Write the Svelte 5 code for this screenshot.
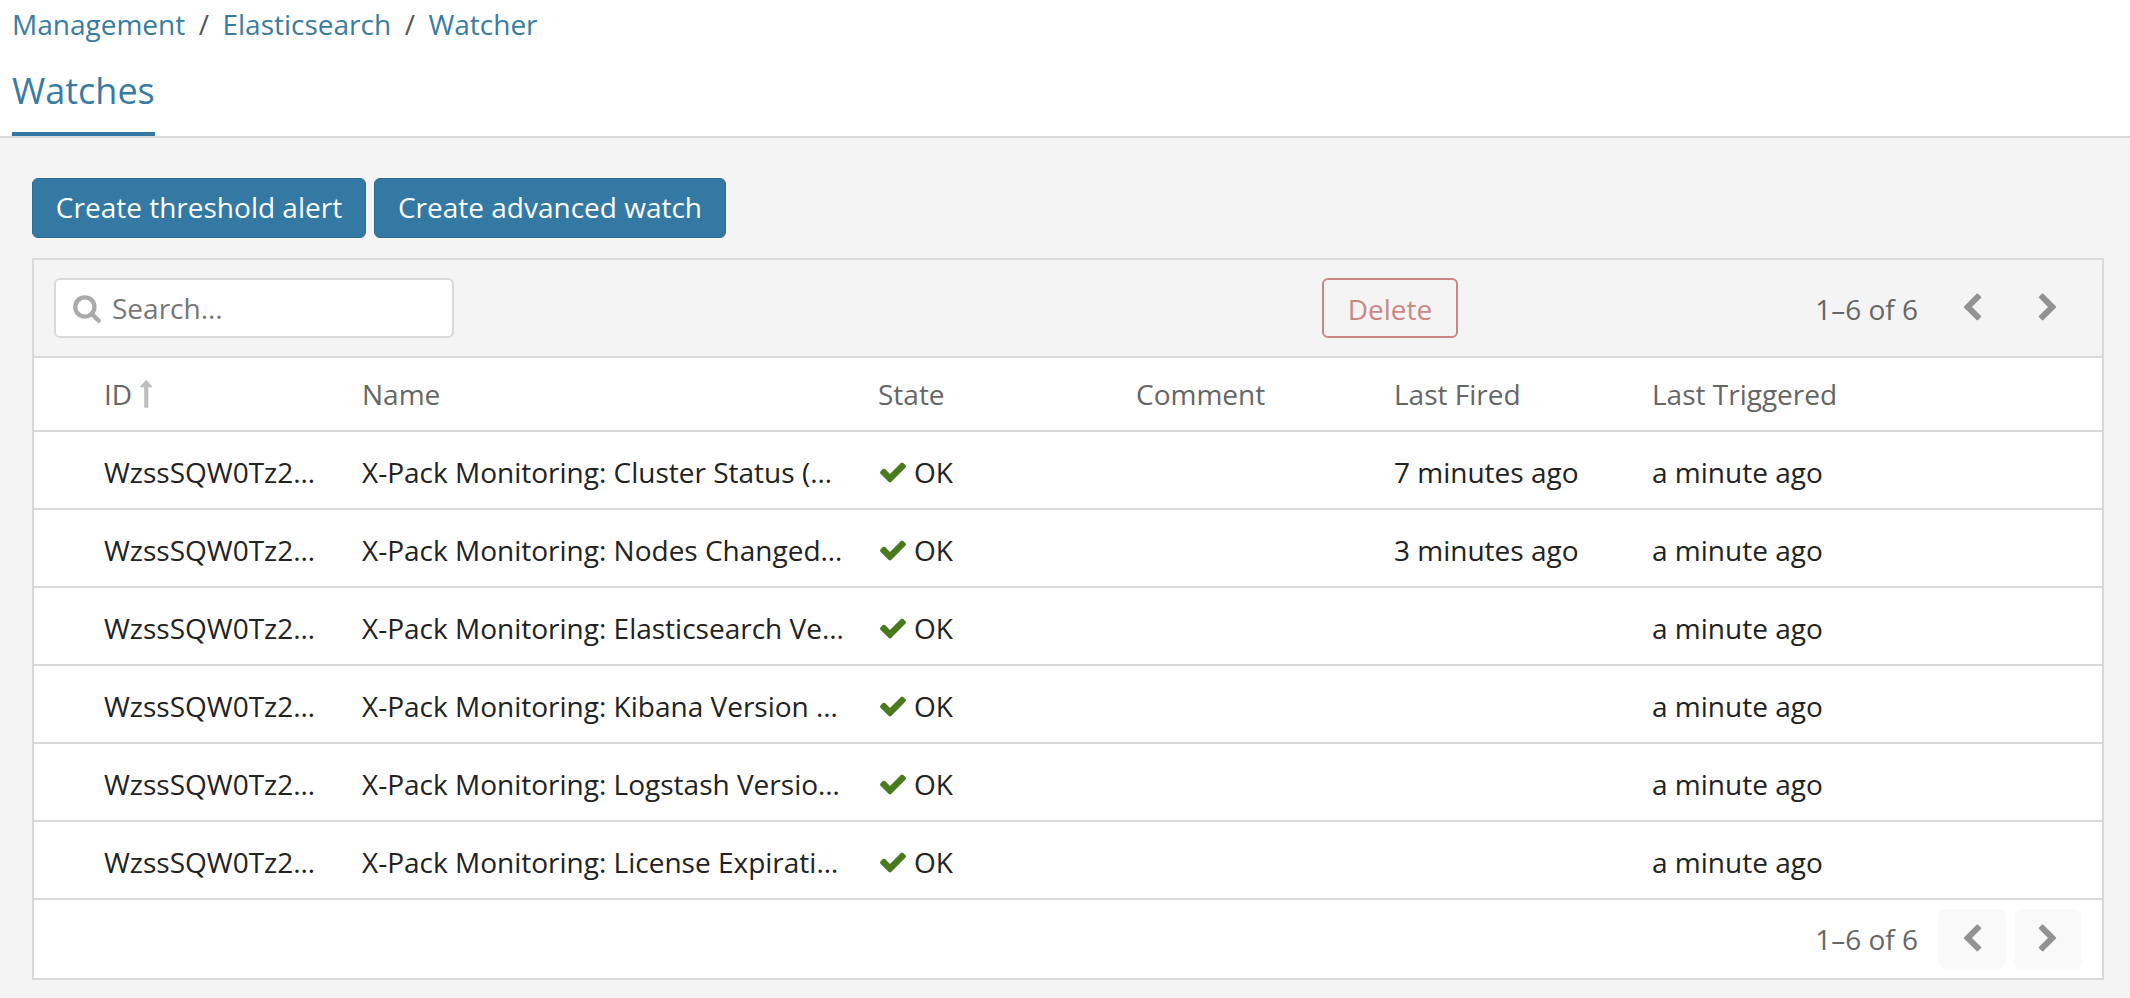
<script>
	const uid = 'WzssSQW0Tz2uc_xRAhk5Vg';
	const watches = [
		{ key: 'elasticsearch_cluster_status', name: 'Cluster Status', fired: '7 minutes ago' },
		{ key: 'elasticsearch_nodes', name: 'Nodes Changed', fired: '3 minutes ago' },
		{ key: 'elasticsearch_version_mismatch', name: 'Elasticsearch Version Mismatch', fired: '' },
		{ key: 'kibana_version_mismatch', name: 'Kibana Version Mismatch', fired: '' },
		{ key: 'logstash_version_mismatch', name: 'Logstash Version Mismatch', fired: '' },
		{ key: 'xpack_license_expiration', name: 'License Expiration', fired: '' }
	];
	const chevronLeft = 'M1427 301l-531 531 531 531q19 19 19 45t-19 45l-166 166q-19 19-45 19t-45-19l-742-742q-19-19-19-45t19-45l742-742q19-19 45-19t45 19l166 166q19 19 19 45t-19 45z';
	const chevronRight = 'M1363 877l-742 742q-19 19-45 19t-45-19l-166-166q-19-19-19-45t19-45l531-531-531-531q-19-19-19-45t19-45l166-166q19-19 45-19t45 19l742 742q19 19 19 45t-19 45z';
</script>

<header>
	<nav class="crumbs">
		<a href="#m">Management</a><span class="sep">/</span><a href="#e">Elasticsearch</a><span class="sep">/</span><a href="#w">Watcher</a>
	</nav>
	<div class="tab">Watches</div>
</header>

<main>
	<div class="actions">
		<button class="primary first">Create threshold alert</button>
		<button class="primary second">Create advanced watch</button>
	</div>

	<section class="panel">
		<div class="toolbar">
			<div class="search">
				<svg viewBox="0 0 1792 1792" width="30" height="30"><path fill="#aaa" d="M1216 832q0-185-131.5-316.5t-316.5-131.5-316.5 131.5-131.5 316.5 131.5 316.5 316.5 131.5 316.5-131.5 131.5-316.5zm512 832q0 52-38 90t-90 38q-54 0-90-38l-343-342q-179 124-399 124-143 0-273.5-55.5t-225-150-150-225-55.5-273.5 55.5-273.5 150-225 225-150 273.5-55.5 273.5 55.5 225 150 150 225 55.5 273.5q0 220-124 399l343 343q37 37 37 90z"/></svg>
				<span>Search...</span>
			</div>
			<button class="delete">Delete</button>
			<div class="pager">
				<span class="count">1–6 of 6</span>
				<span class="page"><svg viewBox="0 0 1792 1792" width="30" height="30"><path d={chevronLeft}/></svg></span>
				<span class="page"><svg viewBox="0 0 1792 1792" width="30" height="30"><path d={chevronRight}/></svg></span>
			</div>
		</div>

		<div class="row head">
			<div class="cell">ID<svg class="sort" viewBox="400 60 900 1740" width="15" height="28"><path fill="#bdbdbd" d="M1277 493q-9 19-29 19h-224v1248q0 14-9 23t-23 9h-192q-14 0-23-9t-9-23v-1248h-224q-21 0-29-19t5-35l350-384q10-10 23-10 14 0 24 10l355 384q13 16 5 35z"/></svg></div>
			<div class="cell">Name</div>
			<div class="cell">State</div>
			<div class="cell">Comment</div>
			<div class="cell">Last Fired</div>
			<div class="cell">Last Triggered</div>
		</div>

		{#each watches as w}
			<div class="row body">
				<div class="cell"><span class="trunc">{uid}_{w.key}</span></div>
				<div class="cell"><span class="trunc">X-Pack Monitoring: {w.name} ({uid})</span></div>
				<div class="cell">
					<svg class="check" viewBox="0 0 1792 1792" width="30" height="30"><path fill="#4a7a1e" d="M1671 566q0 40-28 68l-724 724-136 136q-28 28-68 28t-68-28l-136-136-362-362q-28-28-28-68t28-68l136-136q28-28 68-28t68 28l294 295 656-657q28-28 68-28t68 28l136 136q28 28 28 68z"/></svg><span>OK</span>
				</div>
				<div class="cell"></div>
				<div class="cell">{w.fired}</div>
				<div class="cell">a minute ago</div>
			</div>
		{/each}

		<div class="footer">
			<span class="count">1–6 of 6</span>
			<span class="page boxed"><svg viewBox="0 0 1792 1792" width="30" height="30"><path d={chevronLeft}/></svg></span>
			<span class="page boxed"><svg viewBox="0 0 1792 1792" width="30" height="30"><path d={chevronRight}/></svg></span>
		</div>
	</section>
</main>

<style>
	:global(body) {
		background: #f4f4f4;
		font-family: 'Open Sans', sans-serif;
		font-size: 28px;
		color: #222;
	}

	header {
		background: #fff;
		height: 136px;
		border-bottom: 2px solid #d9d9d9;
		padding-left: 12px;
		display: flex;
		flex-direction: column;
	}

	.crumbs {
		height: 48px;
		line-height: 48px;
		white-space: nowrap;
	}

	.crumbs a {
		color: #3a7ba3;
		text-decoration: none;
	}

	.sep {
		color: #555;
		margin: 0 13.5px;
	}

	.tab {
		margin-top: auto;
		align-self: flex-start;
		font-size: 36px;
		line-height: 48px;
		height: 82px;
		padding-top: 13px;
		box-sizing: border-box;
		color: #3a7ba3;
		border-bottom: 4px solid #3379a3;
	}

	main {
		padding: 40px 26px 20px 32px;
	}

	.actions {
		display: flex;
		gap: 8px;
		margin-bottom: 20px;
	}

	button {
		font: inherit;
		box-sizing: border-box;
		height: 60px;
		border-radius: 6px;
		padding: 0;
	}

	.primary {
		background: #3379a3;
		border: 1px solid #2d6c92;
		color: #fff;
		padding-bottom: 2px;
	}

	.first {
		width: 334px;
	}

	.second {
		width: 352px;
	}

	.panel {
		border: 2px solid #d9d9d9;
		background: #fff;
	}

	.toolbar {
		height: 98px;
		box-sizing: border-box;
		background: #f4f4f4;
		border-bottom: 2px solid #d9d9d9;
		padding: 18px 20px;
		display: flex;
		align-items: center;
	}

	.search {
		width: 400px;
		height: 60px;
		box-sizing: border-box;
		background: #fff;
		border: 2px solid #d9d9d9;
		border-radius: 6px;
		display: flex;
		align-items: center;
		gap: 10px;
		padding-left: 16px;
		color: #777;
	}

	.delete {
		width: 136px;
		margin-left: 868px;
		background: transparent;
		border: 2px solid #cc8782;
		color: #cc8782;
		padding-top: 2px;
	}

	.pager,
	.footer {
		display: flex;
		align-items: center;
		justify-content: flex-end;
		color: #666;
	}

	.pager {
		margin-left: auto;
		gap: 8px;
	}

	.pager .count {
		padding-top: 2px;
	}

	.count {
		margin-right: 12px;
	}

	.page {
		width: 68px;
		height: 60px;
		display: flex;
		align-items: center;
		justify-content: center;
		fill: #929292;
	}

	.boxed {
		background: #f9f9f9;
		border-radius: 8px;
	}

	.row {
		display: grid;
		grid-template-columns: 258px 516px 258px 258px 258px 1fr;
		padding-left: 70px;
		align-items: center;
		border-bottom: 2px solid #d9d9d9;
		box-sizing: border-box;
		height: 78px;
	}

	.head {
		height: 74px;
		color: #666;
	}

	.cell {
		display: flex;
		align-items: center;
		min-width: 0;
		white-space: nowrap;
	}

	.body .cell {
		padding-top: 3px;
	}

	.trunc {
		overflow: hidden;
		text-overflow: ellipsis;
		margin-right: 34px;
	}

	.sort {
		margin-left: 6px;
	}

	.check {
		margin-right: 6px;
	}

	.footer {
		height: 78px;
		padding-right: 20px;
		gap: 8px;
	}
</style>
